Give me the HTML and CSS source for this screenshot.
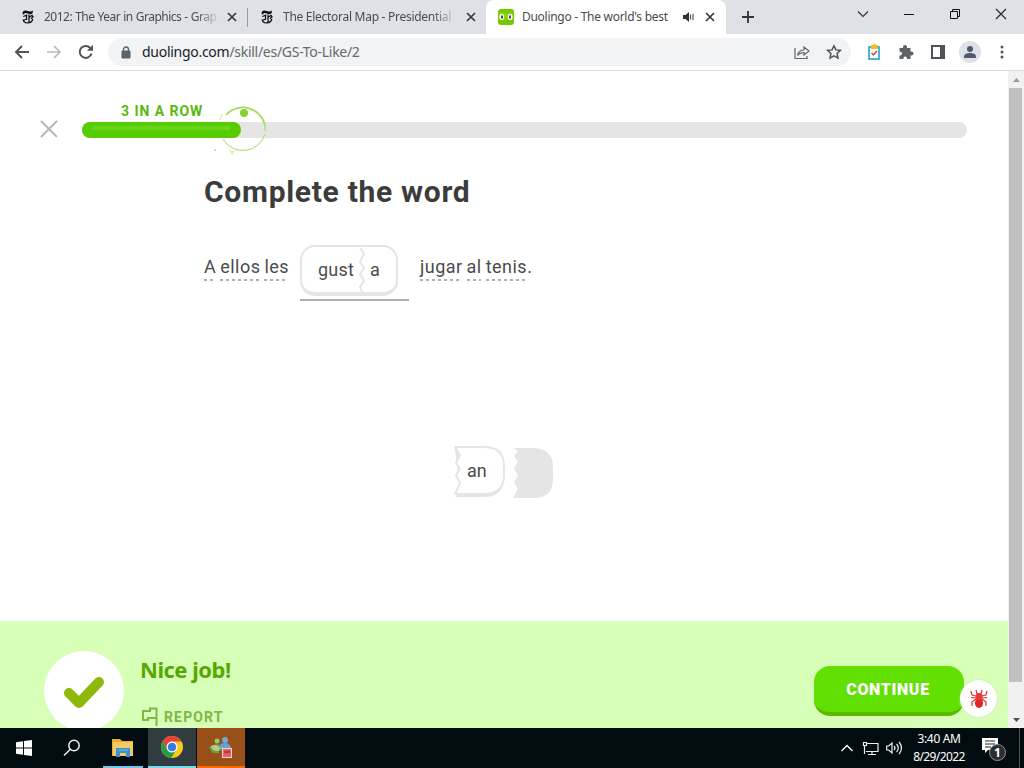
FILE: index.html
```html
<!DOCTYPE html>
<html lang="en">
<head>
<meta charset="utf-8">
<title>Duolingo - The world's best way to learn a language</title>
<link rel="stylesheet" href="styles.css">
</head>
<body>
<svg class="defs" width="0" height="0">
  <symbol id="close" viewBox="0 0 10 10"><path d="M1 1l8 8M9 1L1 9" fill="none" stroke="currentColor" stroke-width="1.7"/></symbol>
  <symbol id="nyt" viewBox="0 0 12 14"><path d="M.5 4Q.5.300 3.500.500L8 1.600Q9.800 1.800 10.500.300 11.800 3.800 8.500 4.200L3.800 3Q2 2.600 2.200 4.500z" fill="#111"/><path d="M4.500 4.500v5.500M1.200 6.500l4-1.500M1 10.500l4-1.500M1.200 9.500Q1.500 13 5.800 12.900 10 12.700 10.800 9M7 4.500v8M7.500 7l2.500-1.500L11 7 9 8.700" fill="none" stroke="#111" stroke-width="1.300"/></symbol>
</svg>
<header class="tabstrip">
  <div class="tab tab-first"><svg class="nyt"><use href="#nyt"/></svg><span class="tab-title fade t1">2012: The Year in Graphics - Grap</span><svg class="tab-close"><use href="#close"/></svg></div>
  <div class="tab tab-second"><svg class="nyt"><use href="#nyt"/></svg><span class="tab-title fade t2">The Electoral Map - Presidential</span><svg class="tab-close"><use href="#close"/></svg></div>
  <div class="tab tab-active">
    <svg class="duo" viewBox="0 0 16 16"><rect width="16" height="16" rx="3" fill="#78c800"/><path d="M1 4q3-2 7 1 4-3 7-1v5q-3 4-7 1-4 3-7-1z" fill="#8cd60c"/><rect x="1.500" y="5" width="4.500" height="6" rx="2" fill="#fff"/><rect x="10" y="5" width="4.500" height="6" rx="2" fill="#fff"/><rect x="3" y="6.500" width="2" height="3" fill="#4b4b4b"/><rect x="11" y="6.500" width="2" height="3" fill="#4b4b4b"/></svg>
    <span class="tab-title t3">Duolingo - The world's best</span>
    <svg class="audio" viewBox="0 0 12 10"><path d="M0 3h2.500L6 0v10L2.500 7H0z" fill="#333"/><path d="M7.500 2.500v5M10 2v6" stroke="#555" stroke-width="1.200"/></svg>
    <svg class="tab-close"><use href="#close"/></svg>
  </div>
  <svg class="plus" viewBox="0 0 12 12"><path d="M6 0v12M0 6h12" stroke="#333" stroke-width="1.800"/></svg>
  <div class="window-controls">
    <svg width="12" height="8"><path d="M1 1.500l5 5 5-5" fill="none" stroke="#333" stroke-width="1.200"/></svg>
    <svg width="10" height="8"><path d="M0 4.500h10" stroke="#111"/></svg>
    <svg width="10" height="10"><path d="M.5 2.500h7v7h-7zM2.500 2.500v-2h7v7h-2" fill="none" stroke="#111"/></svg>
    <svg width="12" height="12"><path d="M1 1l10 10M11 1L1 11" stroke="#222" stroke-width="1.100"/></svg>
  </div>
</header>
<nav class="toolbar">
  <svg class="nav-back" viewBox="0 0 16 16"><path d="M15 8H2M8 2L2 8l6 6" fill="none" stroke="#505357" stroke-width="1.900"/></svg>
  <svg class="nav-forward" viewBox="0 0 16 16"><path d="M1 8h13M8 2l6 6-6 6" fill="none" stroke="#b8babd" stroke-width="1.700"/></svg>
  <svg class="nav-reload" viewBox="0 0 16 16"><path d="M13.500 9.500A6 6 0 1 1 12.300 4" fill="none" stroke="#505357" stroke-width="2"/><path d="M15 .8v6H9z" fill="#505357"/></svg>
  <div class="omnibox">
    <svg class="lock" viewBox="0 0 10 13"><rect x=".5" y="4.500" width="9" height="8" rx="1" fill="#5f6368"/><path d="M2.500 5V3.500a2.500 2.500 0 0 1 5 0V5" fill="none" stroke="#5f6368" stroke-width="1.400"/></svg>
    <span class="url"><b>duolingo.com</b>/skill/es/GS-To-Like/2</span>
    <svg class="share" viewBox="0 0 16 14"><path d="M1 3v10.500h12V11M3.500 10.500C4.500 6.500 7 5 10 5V2l5 4-5 4V7.500C7 7.500 5 8.500 3.500 10.500z" fill="none" stroke="#5f6368" stroke-width="1.200"/></svg>
    <svg class="star" viewBox="0 0 16 16"><path d="M8 1.700l1.900 4.200 4.500.5-3.300 3.100.9 4.600L8 11.800l-4 2.300.9-4.600L1.600 6.400l4.500-.5z" fill="none" stroke="#505357" stroke-width="1.500"/></svg>
  </div>
  <div class="extensions">
    <svg width="14" height="16"><rect x="2" y="3" width="10" height="12" fill="#fff" stroke="#28a9d0" stroke-width="1.700"/><path d="M4 1h2.500V0h2v1H11v4H4z" fill="#f7bd20"/><path d="M4.500 9l2 2 3.500-4" fill="none" stroke="#dc3852" stroke-width="1.500"/></svg>
    <svg width="16" height="16"><path d="M1.500 4H5V3a2 2 0 0 1 4 0v1h3.500v3.500h1a2 2 0 0 1 0 4h-1V15H9v-.8a1.800 1.800 0 0 0-3.600 0v.8H1.500v-3.600h.8a1.800 1.800 0 0 0 0-3.600h-.8z" fill="#5f6368"/></svg>
    <svg width="14" height="14"><path d="M1 1h12v12H1z" fill="none" stroke="#505357" stroke-width="2"/><path d="M9 1h4v12H9z" fill="#505357"/></svg>
    <svg class="avatar" width="22" height="22"><circle cx="11" cy="11" r="11" fill="#dee1e9"/><circle cx="11" cy="8" r="3" fill="#4f5b6a"/><path d="M5 17v-1.500c0-4.600 12-4.600 12 0V17z" fill="#4f5b6a"/></svg>
    <svg width="4" height="14"><g fill="#505357"><circle cx="2" cy="2" r="1.500"/><circle cx="2" cy="7" r="1.500"/><circle cx="2" cy="12" r="1.500"/></g></svg>
  </div>
</nav>
<div class="viewport">
  <div class="page">
    <section class="progress">
      <svg class="quit" viewBox="0 0 18 18"><path d="M1 1l16 16M17 1L1 17" stroke="#b7b7b7" stroke-width="2"/></svg>
      <div class="track"><div class="fill"></div><span class="streak">3 IN A ROW</span>
        <svg class="burst" viewBox="0 0 54 54"><g fill="none" stroke="#a5db60"><path d="M7 13A22.500 22.500 0 0 1 46 24" stroke-width="1.800"/><path d="M46 24v5M4 37A23 23 0 0 0 46 32" stroke-width="1"/><path d="M1 18l2-6" stroke-width=".6"/></g><circle cx="25" cy="11" r="4" fill="#87d231"/><path d="M9 47l4 2 4-1-4 5z" fill="#def3b6"/><circle cx="-4" cy="48" r="1" fill="#ccc"/></svg>
      </div>
    </section>
    <main class="exercise">
      <h1>Complete the word</h1>
      <div class="sentence">
        <span class="words before"><u>A</u> <u>ellos</u> <u>les</u></span>
        <span class="blank">
          <span class="joined"><span class="stem">gust</span><svg class="seam" viewBox="0 0 8 46"><path d="M2 1l4 6-4 8 4 6-4 6 4 7-4 6 2 5" fill="none" stroke="#e5e5e5" stroke-width="2" stroke-linejoin="round"/></svg><span class="ending">a</span></span>
        </span>
        <span class="words after"><u>jugar</u> <u>al</u> <u>tenis</u>.</span>
      </div>
      <div class="bank">
        <div class="piece"><svg viewBox="0 0 52 52"><path d="M1 3h29q20 0 20 20v8q0 20-20 20H1l5-7z" fill="#e5e5e5"/><path d="M1 1h29q20 0 20 19v9q0 19-20 19H1l5-11-4-8 4-6-4-6 4-8z" fill="#fff" stroke="#e5e5e5" stroke-width="2" stroke-linejoin="round"/></svg><span>an</span></div>
        <svg class="used" viewBox="0 0 40 50"><path d="M0 0h21q19 1 19 19v12q0 19-19 19H0l5-9-4-7 4-7-4-6 4-7-4-6 4-5z" fill="#e5e5e5"/></svg>
      </div>
    </main>
    <footer class="feedback">
      <div class="result"><svg viewBox="0 0 40 31"><path d="M5 16l10 10L35 5" fill="none" stroke="#8fb90a" stroke-width="10" stroke-linecap="round" stroke-linejoin="round"/></svg></div>
      <div class="message"><h2>Nice job!</h2><a class="report"><svg viewBox="0 0 18 19"><path d="M15.500 19V1.500H9V4H2v9h5v-2h8.500" fill="none" stroke="#80b743" stroke-width="2"/></svg><span>REPORT</span></a></div>
      <button class="continue">CONTINUE</button>
      <div class="bug"><svg viewBox="0 0 18 20"><ellipse cx="9" cy="14" rx="4" ry="5" fill="#db2529"/><ellipse cx="9" cy="7.500" rx="3.500" ry="3.500" fill="#e73935"/><path d="M7 5L6 1M11 5l1-4M6 7L2 6 1 2M12 7l4-1 1-4M6 9L1 8.500M12 9l5-.5M6 10l-4 3v4M12 10l4 3v4" fill="none" stroke="#df3030" stroke-width="1.200"/></svg></div>
    </footer>
  </div>
  <aside class="scrollbar"><svg width="7" height="4"><path d="M0 4l3.500-4L7 4z" fill="#999"/></svg><div class="thumb"></div><svg width="7" height="4"><path d="M0 0l3.500 4L7 0z" fill="#505050"/></svg></aside>
</div>
<footer class="taskbar">
  <div class="task"><svg width="16" height="16"><path d="M0 2.200L7 1.200V7.500H0zM8 1l8-1v7.500H8zM0 8.500h7v6.300l-7-1zM8 8.500h8V16l-8-1z" fill="#fff"/></svg></div>
  <div class="task"><svg width="18" height="18"><circle cx="11" cy="6.500" r="5.200" fill="none" stroke="#eee" stroke-width="1.500"/><path d="M7.300 10.200L1 16.500" stroke="#eee" stroke-width="1.500"/></svg></div>
  <div class="task explorer"><svg width="22" height="19"><path d="M0 1h8l2 2h11v15H0z" fill="#e9ad35"/><path d="M1 4h20v14H1z" fill="#f3c963"/><path d="M4 10h14v9h-4v-4H8v4H4z" fill="#3e91d1"/><path d="M6 12h10" stroke="#70b5e5"/></svg></div>
  <div class="task chrome"><svg width="24" height="24" viewBox="0 0 24 24"><circle cx="12" cy="12" r="11" fill="#fbc91d"/><path d="M2.500 6.500A11 11 0 0 1 21.500 6.500H12L7.200 14.700z" fill="#e54335"/><path d="M2.500 6.500A11 11 0 0 0 11 23l5.700-8.500H7.200z" fill="#279b48"/><circle cx="12" cy="12" r="5.500" fill="#fff"/><circle cx="12" cy="12" r="4.300" fill="#327ce8"/></svg></div>
  <div class="task people"><svg width="24" height="24"><circle cx="8" cy="6" r="2.500" fill="#8fce72"/><circle cx="16" cy="5" r="3" fill="#72a9dc"/><path d="M3 16q0-7 6-7t6 7z" fill="#4e9c48"/><path d="M11 12q0-4 5-4t6 5v1H11z" fill="#5fa5d8"/><path d="M1 12q5-5 11 1-4 6-9 4z" fill="#b9c783"/><path d="M1 12q2 6 9 5" fill="none" stroke="#5aa53d" stroke-width="2"/><rect x="13.500" y="13.500" width="9" height="9" fill="#e9606a" stroke="#fbd3d1"/><path d="M15 17h6" stroke="#b63945" stroke-width="2.500"/></svg></div>
  <div class="tray">
    <svg width="12" height="8"><path d="M.5 7L6 1.500 11.500 7" fill="none" stroke="#fff" stroke-width="1.300"/></svg>
    <svg class="network" width="17" height="15"><path d="M5 2.500h11v8H4M2.500 5v8M6 13.500h8M10 10.500v3M1.500 1.500h3v3h-3z" fill="none" stroke="#eee" stroke-width="1.200"/></svg>
    <svg class="volume" width="17" height="14"><path d="M.7 5h2L6 2v10L2.700 9h-2zM8 5q2 2 0 4M10.500 3q3.500 4 0 8M13 1q5 6 0 12" fill="none" stroke="#eee" stroke-width="1.200"/></svg>
    <div class="clock"><span class="time">3:40 AM</span><span class="date">8/29/2022</span></div>
    <div class="notifications"><svg width="16" height="16"><path d="M0 0h16v12H6l-3 3v-3H0z" fill="#fff"/><path d="M3 3h10M3 6h10M3 9h6" stroke="#222"/></svg><span>1</span></div>
    <div class="desktop-edge"></div>
  </div>
</footer>
</body>
</html>
```
FILE: styles.css
```css
* { box-sizing: border-box; }
body { margin: 0; width: 1024px; height: 768px; display: flex; flex-direction: column; overflow: hidden; font-family: "Noto Sans", sans-serif; }
svg { display: block; flex: none; overflow: visible; }
.defs { position: absolute; }
.tabstrip { height: 34px; flex: none; display: flex; align-items: center; background: #dee1e6; color: #484b50; }
.tab { height: 34px; display: flex; align-items: center; flex: none; }
.tab-first { width: 248px; padding-left: 22px; }
.tab-first::after { content: ""; width: 1px; height: 19px; margin-left: 10px; background: #989ba0; }
.tab-second { width: 238px; padding-left: 13px; }
.nyt { width: 12px; height: 14px; }
.tab-title { font-size: 12px; white-space: nowrap; line-height: 18px; }
.fade { mask-image: linear-gradient(90deg, #000 88%, rgba(0, 0, 0, .15)); }
.t1 { width: 173px; margin-left: 10px; letter-spacing: -0.5px; word-spacing: .4px; }
.t2 { width: 170px; margin-left: 10px; letter-spacing: -0.28px; }
.t3 { width: 149px; margin-left: 8px; letter-spacing: -0.28px; }
.tab-close { width: 10px; height: 10px; margin-left: 10px; color: #35383c; }
.tab-second .tab-close { margin-left: 13px; }
.tab-active { width: 240px; padding-left: 12px; background: #fff; border-radius: 8px 8px 0 0; }
.duo { width: 16px; height: 16px; }
.audio { width: 12px; height: 10px; margin-left: 12px; }
.tab-active .tab-close { margin-left: 10px; }
.plus { width: 12px; height: 12px; margin-left: 16px; }
.window-controls { display: flex; align-items: center; justify-content: space-between; margin-left: auto; width: 150px; margin-right: 17px; padding-bottom: 6px; }
.toolbar { height: 37px; flex: none; display: flex; align-items: center; border-bottom: 1px solid #dadada; background: #fff; padding-left: 14px; }
.nav-back, .nav-forward, .nav-reload { width: 16px; height: 16px; margin-right: 16px; }
.omnibox { width: 743px; height: 28px; margin-left: -2px; border-radius: 14px; background: #f1f3f4; display: flex; align-items: center; padding: 0 9px 0 13px; }
.lock { width: 10px; height: 13px; margin-right: 11px; }
.url { font-size: 14px; line-height: 20px; color: #66696d; letter-spacing: -0.28px; }
.url b { font-weight: 400; color: #202124; }
.share { width: 16px; height: 14px; margin-left: auto; }
.star { width: 16px; height: 16px; margin-left: 16px; }
.extensions { margin-left: 16px; display: flex; align-items: center; gap: 17px; }
.avatar { margin: 0 2px 0 -3px; }
.viewport { height: 657px; flex: none; display: flex; }
.page { width: 1008px; display: flex; flex-direction: column; background: #fff; }
.scrollbar { width: 16px; background: #f1f1f1; display: flex; flex-direction: column; align-items: center; padding: 7px 0 6px; }
.thumb { width: 13px; height: 594px; margin: 6px 1px auto 0; background: #c1c1c1; }
.progress { height: 103px; flex: none; display: flex; align-items: flex-start; padding: 50px 0 0 40px; }
.quit { width: 18px; height: 18px; margin-top: -1px; }
.track { width: 885px; height: 16px; margin: 1px 0 0 24px; background: #e5e5e5; border-radius: 8px; position: relative; }
.fill { width: 159px; height: 16px; border-radius: 8px; background: #58cc02; padding: 4px 10px; }
.fill::before { content: ""; display: block; height: 4px; border-radius: 3px; background: #69d41d; }
.streak { position: absolute; left: 39px; top: -20px; font: 700 14px/18px Roboto, sans-serif; letter-spacing: .95px; color: #58b910; white-space: nowrap; }
.burst { position: absolute; left: 137px; top: -20px; width: 54px; height: 54px; }
.exercise { height: 447px; flex: none; padding-left: 204px; font-family: Roboto, sans-serif; color: #4b4b4b; }
h1 { margin: 0; font-size: 30px; line-height: 36px; letter-spacing: 0.7px; color: #3c3c3c; }
.sentence { margin-top: 35px; height: 56px; display: flex; align-items: flex-start; font-size: 18px; line-height: 22px; }
.words { white-space: nowrap; padding-top: 11px; letter-spacing: .48px; word-spacing: -1px; }
.words u { text-decoration: none; display: inline-block; height: 25px; background: repeating-linear-gradient(90deg, #afafaf 0 3px, transparent 3px 6px) 0 100% / calc(100% - 1px) 2px no-repeat; }
.before { width: 96px; }
.blank { width: 109px; height: 56px; border-bottom: 2px solid #afafaf; }
.joined { width: 98px; height: 51px; border: 2px solid #e5e5e5; border-bottom-width: 4px; border-radius: 15px; display: flex; align-items: center; }
.stem { width: 37px; margin-left: 16px; letter-spacing: .2px; }
.seam { width: 8px; height: 46px; margin-left: 3px; }
.ending { margin-left: 4px; }
.after { margin-left: 11px; }
.bank { display: flex; margin: 145px 0 0 250px; }
.piece { width: 52px; height: 52px; display: grid; }
.piece > * { grid-area: 1 / 1; }
.piece span { font-size: 18px; line-height: 50px; padding-left: 13px; letter-spacing: 0; z-index: 1; }
.used { width: 40px; height: 50px; margin: 2px 0 0 7px; }
.feedback { height: 107px; background: #d7ffb8; display: flex; align-items: flex-start; padding-left: 44px; overflow: hidden; }
.result { width: 80px; height: 80px; flex: none; margin-top: 30px; background: #fff; border-radius: 50%; display: grid; place-items: center; padding-top: 2px; }
.result svg { width: 40px; height: 31px; }
.message { margin: 33px 0 0 16px; width: 200px; }
h2 { margin: 0; color: #58a700; font-size: 22px; line-height: 30px; letter-spacing: -.5px; }
.report { display: flex; align-items: center; margin-top: 23px; margin-left: 1px; color: #80b743; font: 700 14px/18px Roboto, sans-serif; letter-spacing: 1.15px; }
.report svg { width: 18px; height: 19px; margin-right: 5px; }
.continue { width: 150px; height: 50px; margin: 45px 0 0 474px; padding: 1px 2px 0 0; border: 0; border-bottom: 4px solid #58b900; border-radius: 16px; background: #61e002; color: #fff; font: 900 16px/46px Roboto, sans-serif; letter-spacing: .65px; }
.bug { width: 37px; height: 37px; margin: 59px 0 0 -4px; border-radius: 50%; background: #fff; display: grid; place-items: center; z-index: 1; box-shadow: 0 0 2px #bddca8; }
.bug svg { width: 18px; height: 20px; }
.taskbar { height: 40px; flex: none; display: flex; background: #020c10; color: #fff; }
.task { width: 48px; height: 40px; display: grid; place-items: center; flex: none; }
.explorer { border-bottom: 2px solid #76c7e7; margin-left: 7px; width: 40px; margin-right: 5px; }
.chrome { background: #303c40; border-bottom: 2px solid #76d7ea; }
.people { background: #995018; border-bottom: 2px solid #ff6a00; margin-left: 1px; }
.tray { margin-left: auto; display: flex; align-items: center; }
.network { margin-left: 9px; }
.volume { margin-left: 7px; }
.clock { display: flex; flex-direction: column; align-items: center; font-size: 12px; line-height: 18px; width: 58px; margin-left: 7px; white-space: nowrap; }
.time { letter-spacing: -.35px; }
.date { letter-spacing: -.6px; }
.notifications { width: 27px; height: 28px; margin: 7px 0 0 14px; display: grid; }
.notifications > * { grid-area: 1 / 1; }
.notifications span { width: 17px; height: 17px; margin: 6px 0 0 7px; border: 1px solid #929292; border-radius: 50%; background: #292e31; text-align: center; font: 700 12px/15px "Noto Sans", sans-serif; z-index: 1; }
.desktop-edge { width: 1px; height: 40px; margin: 0 4px 0 10px; background: #555; }
```
